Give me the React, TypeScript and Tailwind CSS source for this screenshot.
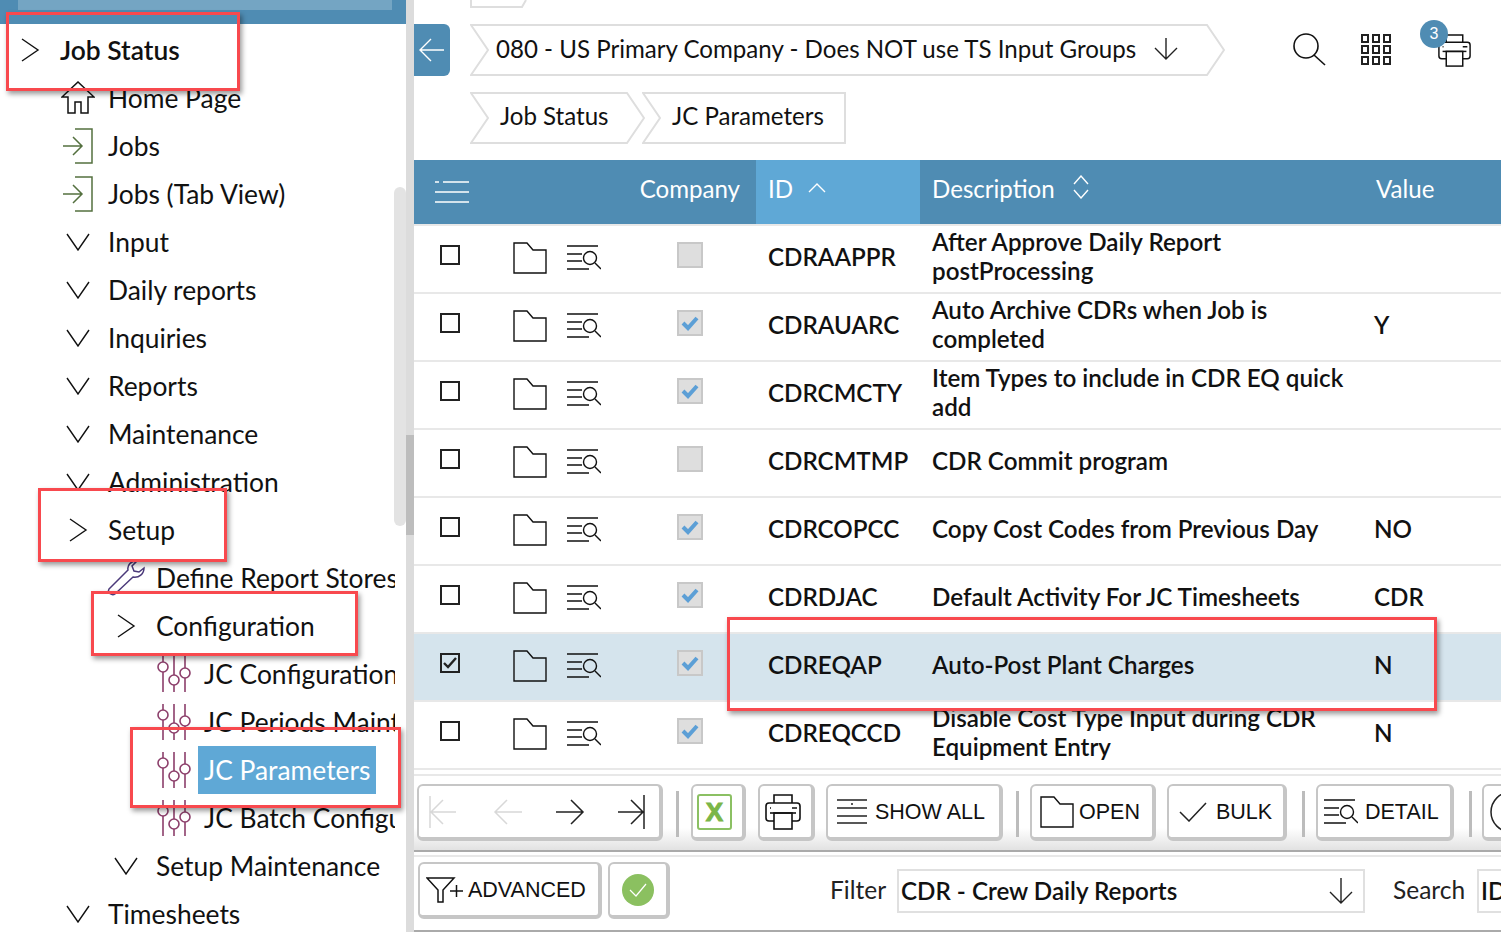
import type { ReactNode } from "react";

const Chevron = ({ dir }: { dir: "right" | "down" }) =>
  dir === "right" ? (
    <svg width="20" height="26" viewBox="0 0 20 26" fill="none" stroke="#111" strokeWidth="1.4">
      <path d="M2 2 L18 13 L2 24" />
    </svg>
  ) : (
    <svg width="24" height="18" viewBox="0 0 24 18" fill="none" stroke="#111" strokeWidth="1.4">
      <path d="M1 1 L12 17 L23 1" />
    </svg>
  );

const HomeIcon = () => (
  <svg width="34" height="34" viewBox="0 0 34 34" fill="none" stroke="#111" strokeWidth="1.5">
    <path d="M1 16 L17 1 L33 16 L27 16 L27 32 L20 32 L20 21 L14 21 L14 32 L7 32 L7 16 Z" />
  </svg>
);

const JobIcon = () => (
  <svg width="32" height="36" viewBox="0 0 32 36" fill="none" stroke="#54703f" strokeWidth="1.5">
    <path d="M13 1 H30 V35 H13" />
    <path d="M1 18 H20 M11 9 L20 18 L11 27" />
  </svg>
);

const SliderIcon = () => (
  <svg width="36" height="38" viewBox="0 0 36 38" fill="none" stroke="#8c3f6b" strokeWidth="1.6">
    <path d="M7 1 V7 M7 17 V37 M18 1 V20 M18 30 V37 M29 1 V13 M29 23 V37" />
    <circle cx="7" cy="12" r="5" />
    <circle cx="18" cy="25" r="5" />
    <circle cx="29" cy="18" r="5" />
  </svg>
);

const WrenchIcon = () => (
  <svg width="38" height="36" viewBox="0 0 38 36" fill="none" stroke="#4b3a7a" strokeWidth="1.5">
    <path d="M2 29 L21 10 C20 5 24 1 30 1 L25 6 L27 11 L32 12 L37 8 C37 14 32 18 26 17 L8 34 C5 36 0 33 2 29 Z" />
  </svg>
);

type NavItem = { level: number; icon: ReactNode; label: string; selected?: boolean; bold?: boolean };

const navItems: NavItem[] = [
  { level: 0, icon: <Chevron dir="right" />, label: "Job Status", bold: true },
  { level: 1, icon: <HomeIcon />, label: "Home Page" },
  { level: 1, icon: <JobIcon />, label: "Jobs" },
  { level: 1, icon: <JobIcon />, label: "Jobs (Tab View)" },
  { level: 1, icon: <Chevron dir="down" />, label: "Input" },
  { level: 1, icon: <Chevron dir="down" />, label: "Daily reports" },
  { level: 1, icon: <Chevron dir="down" />, label: "Inquiries" },
  { level: 1, icon: <Chevron dir="down" />, label: "Reports" },
  { level: 1, icon: <Chevron dir="down" />, label: "Maintenance" },
  { level: 1, icon: <Chevron dir="down" />, label: "Administration" },
  { level: 1, icon: <Chevron dir="right" />, label: "Setup" },
  { level: 2, icon: <WrenchIcon />, label: "Define Report Stores" },
  { level: 2, icon: <Chevron dir="right" />, label: "Configuration" },
  { level: 3, icon: <SliderIcon />, label: "JC Configuration" },
  { level: 3, icon: <SliderIcon />, label: "JC Periods Maintenance" },
  { level: 3, icon: <SliderIcon />, label: "JC Parameters", selected: true },
  { level: 3, icon: <SliderIcon />, label: "JC Batch Configuration" },
  { level: 2, icon: <Chevron dir="down" />, label: "Setup Maintenance" },
  { level: 1, icon: <Chevron dir="down" />, label: "Timesheets" },
];

const levelPadding = ["pl-[6px]", "pl-[54px]", "pl-[102px]", "pl-[150px]"];

function Sidebar() {
  return (
    <div className="relative w-[406px] shrink-0 overflow-hidden text-[26.4px]">
      <div className="h-6 bg-[#4f8cb3] pl-[18px] pr-[14px]">
        <div className="h-[10px] bg-[#74a5c3]" />
      </div>
      <div className="w-[395px] overflow-hidden pt-[2px]">
        {navItems.map((item) => (
          <div key={item.label} className={`flex h-12 items-center ${levelPadding[item.level]}`}>
            <div className="flex h-12 w-12 shrink-0 items-center justify-center">{item.icon}</div>
            <span
              className={`flex h-12 items-center whitespace-nowrap px-[6px] ${
                item.selected ? "bg-[#5fa8d6] text-white" : "text-[#111]"
              } ${item.bold ? "font-semibold" : ""}`}
            >
              {item.label}
            </span>
          </div>
        ))}
      </div>
      <div className="absolute left-[394px] top-[187px] h-[339px] w-3 rounded-md bg-[#e3e3e3]" />
    </div>
  );
}

function Crumb({ width, last, className, children }: { width: number; last?: boolean; className: string; children: ReactNode }) {
  const d = last
    ? `M1 1 H${width - 1} V51 H1 L18 26 Z`
    : `M1 1 H${width - 18} L${width - 1} 26 L${width - 18} 51 H1 L18 26 Z`;
  return (
    <div className={`relative flex h-[52px] items-center ${className}`}>
      <svg className="absolute inset-0" width={width} height="52" fill="none" stroke="#dedede" strokeWidth="2">
        <path d={d} />
      </svg>
      {children}
    </div>
  );
}

const FolderIcon = ({ small }: { small?: boolean }) => (
  <svg width="34" height="32" viewBox="0 0 34 32" fill="none" stroke="#111" strokeWidth="1.4" className={small ? "" : "mt-[4px]"}>
    <path d="M1 1 H14 L20 8 H33 V31 H1 Z" />
  </svg>
);

const DetailIcon = () => (
  <svg width="34" height="26" viewBox="0 0 34 26" fill="none" stroke="#111" strokeWidth="1.4">
    <path d="M0 1 H31 M0 9 H15 M0 16 H15 M0 24 H22" />
    <circle cx="23" cy="13" r="6.5" />
    <path d="M28 18 L34 24" />
  </svg>
);

const BlueCheck = () => (
  <svg width="18" height="15" viewBox="0 0 18 15" fill="none" stroke="#5c9fd6" strokeWidth="4">
    <path d="M2 7 L7 12 L16 2" />
  </svg>
);

type RowData = { id: string; desc: string; value: string; on: boolean; selected?: boolean };

const rows: RowData[] = [
  { id: "CDRAAPPR", desc: "After Approve Daily Report postProcessing", value: "", on: false },
  { id: "CDRAUARC", desc: "Auto Archive CDRs when Job is completed", value: "Y", on: true },
  { id: "CDRCMCTY", desc: "Item Types to include in CDR EQ quick add", value: "", on: true },
  { id: "CDRCMTMP", desc: "CDR Commit program", value: "", on: false },
  { id: "CDRCOPCC", desc: "Copy Cost Codes from Previous Day", value: "NO", on: true },
  { id: "CDRDJAC", desc: "Default Activity For JC Timesheets", value: "CDR", on: true },
  { id: "CDREQAP", desc: "Auto-Post Plant Charges", value: "N", on: true, selected: true },
  { id: "CDREQCCD", desc: "Disable Cost Type Input during CDR Equipment Entry", value: "N", on: true },
];

function Row({ row }: { row: RowData }) {
  return (
    <div
      className={`flex h-[68px] items-center border-b-2 border-[#e8e8e8] pb-[6px] pl-[26px] text-[24.2px] font-semibold leading-[29px] text-[#111] ${
        row.selected ? "bg-[#d5e4ed]" : ""
      }`}
    >
      <div className="mb-[2px] flex h-5 w-5 shrink-0 items-center justify-center border-2 border-[#222]">
        {row.selected && (
          <svg width="14" height="12" viewBox="0 0 14 12" fill="none" stroke="#222" strokeWidth="2.4">
            <path d="M1 6 L5 10 L13 1" />
          </svg>
        )}
      </div>
      <div className="ml-[53px] shrink-0">
        <FolderIcon />
      </div>
      <div className="ml-5 mt-[4px] shrink-0">
        <DetailIcon />
      </div>
      <div className="mb-[2px] ml-[76px] flex h-[26px] w-[26px] shrink-0 items-center justify-center border-2 border-[#c8c8c8] bg-[#dedede]">
        {row.on && <BlueCheck />}
      </div>
      <div className="ml-[65px] w-[164px] shrink-0">{row.id}</div>
      <div className="w-[443px] shrink-0 pr-[13px]">{row.desc}</div>
      <div className="-ml-px">{row.value}</div>
    </div>
  );
}

function TableHeader() {
  return (
    <div className="flex h-16 bg-[#4f8cb3] pb-[7px] text-white">
      <div className="flex w-[342px] shrink-0 items-center justify-between pl-[21px] pr-[16px]">
        <svg className="mt-[7px]" width="34" height="22" viewBox="0 0 34 22" stroke="#fff" strokeWidth="1.4">
          <path d="M0 1 H4 M8 1 H34 M0 11 H34 M0 21 H34" />
        </svg>
        <span>Company</span>
      </div>
      <div className="-mb-[7px] flex w-[164px] shrink-0 items-center bg-[#5fa8d6] pb-[7px] pl-3">
        <span>ID</span>
        <svg className="mb-[1px] ml-[15px]" width="18" height="10" viewBox="0 0 18 10" fill="none" stroke="#fff" strokeWidth="1.4">
          <path d="M1 9 L9 1 L17 9" />
        </svg>
      </div>
      <div className="flex w-[443px] shrink-0 items-center pl-3">
        <span>Description</span>
        <svg className="mb-[3px] ml-[17px]" width="18" height="24" viewBox="0 0 18 24" fill="none" stroke="#fff" strokeWidth="1.4">
          <path d="M2 9 L9 1 L16 9 M2 15 L9 23 L16 15" />
        </svg>
      </div>
      <div className="flex items-center pl-[13px]">Value</div>
    </div>
  );
}

function ToolBtn({ className, children }: { className: string; children: ReactNode }) {
  return (
    <div
      className={`flex h-[57px] shrink-0 items-center rounded-md border-2 border-b-4 border-r-4 border-[#c6c6c6] bg-white [font-family:'Liberation_Sans',sans-serif] text-[21.5px] text-[#111] ${className}`}
    >
      {children}
    </div>
  );
}

const Sep = ({ className }: { className: string }) => <div className={`h-[46px] w-[3px] shrink-0 bg-[#bcbcbc] ${className}`} />;

const PrinterIcon = ({ w = 36 }: { w?: number }) => (
  <svg width={w} height={w} viewBox="0 0 36 36" fill="none" stroke="#111" strokeWidth="1.6">
    <path d="M9 9 V1 H27 V9" />
    <rect x="1" y="9" width="34" height="18" rx="3" />
    <path d="M27 14 H32 M5 14 H6" />
    <rect x="9" y="19" width="18" height="16" fill="#fff" />
    <path d="M5 19 H31" />
  </svg>
);

function Toolbar() {
  return (
    <div className="flex h-[76px] items-start overflow-hidden border-b-2 border-[#aaa] bg-gradient-to-b from-white from-70% to-[#e2e2e2] pt-[8px]">
      <ToolBtn className="ml-[3px] w-[246px] pl-[10px]">
        <svg width="28" height="34" viewBox="0 0 28 34" fill="none" stroke="#d8d8d8" strokeWidth="1.5">
          <path d="M1 1 V33 M27 17 H2 M14 5 L2 17 L14 29" />
        </svg>
        <svg className="ml-[36px]" width="30" height="28" viewBox="0 0 30 28" fill="none" stroke="#d8d8d8" strokeWidth="1.5">
          <path d="M29 14 H2 M14 2 L2 14 L14 26" />
        </svg>
        <svg className="ml-[32px]" width="30" height="28" viewBox="0 0 30 28" fill="none" stroke="#222" strokeWidth="1.5">
          <path d="M1 14 H28 M16 2 L28 14 L16 26" />
        </svg>
        <svg className="ml-[32px]" width="28" height="36" viewBox="0 0 28 36" fill="none" stroke="#222" strokeWidth="1.5">
          <path d="M27 1 V35 M1 18 H26 M14 6 L26 18 L14 30" />
        </svg>
      </ToolBtn>
      <Sep className="ml-[13px] mt-[7px]" />
      <ToolBtn className="ml-3 w-[55px] pl-[4px]">
        <div className="flex h-[36px] w-[35px] items-center justify-center rounded-[3px] border-2 border-[#8bc063]">
          <span className="text-[26px] font-bold leading-none text-[#7ab648] [-webkit-text-stroke:1px_#7ab648]">X</span>
        </div>
      </ToolBtn>
      <ToolBtn className="ml-3 w-[57px] pl-[5px]">
        <PrinterIcon />
      </ToolBtn>
      <ToolBtn className="ml-[11px] w-[177px] gap-[7px] pl-[8px]">
        <svg width="32" height="26" viewBox="0 0 32 26" fill="none" stroke="#222" strokeWidth="1.6">
          <path d="M1 1 H31 M1 9 H31 M15 5 H17 M1 17 H31 M1 24 H31" />
        </svg>
        <span>SHOW ALL</span>
      </ToolBtn>
      <Sep className="ml-[13px] mt-[7px]" />
      <ToolBtn className="ml-[11px] w-[126px] gap-[5px] pl-[8px]">
        <FolderIcon small />
        <span>OPEN</span>
      </ToolBtn>
      <ToolBtn className="ml-[11px] w-[120px] gap-[9px] pl-[10px]">
        <svg width="28" height="20" viewBox="0 0 28 20" fill="none" stroke="#222" strokeWidth="1.5">
          <path d="M1 10 L10 19 L27 1" />
        </svg>
        <span>BULK</span>
      </ToolBtn>
      <Sep className="ml-[15px] mt-[7px]" />
      <ToolBtn className="ml-[11px] w-[138px] gap-[7px] pl-[6px]">
        <DetailIcon />
        <span>DETAIL</span>
      </ToolBtn>
      <Sep className="ml-[15px] mt-[7px]" />
      <ToolBtn className="ml-[10px] w-[60px] pl-[5px]">
        <svg width="44" height="44" viewBox="0 0 44 44" fill="none" stroke="#222" strokeWidth="1.5" className="shrink-0">
          <circle cx="22" cy="22" r="20" />
        </svg>
      </ToolBtn>
    </div>
  );
}

function FilterBar() {
  return (
    <div className="mt-[3px] h-[78px] border-t-2 border-[#e8e8e8]">
      <div className="flex h-[75px] items-center border-b-2 border-[#aaa] pb-[6px]">
        <ToolBtn className="ml-1 w-[184px] pl-[6px]">
          <svg width="40" height="26" viewBox="0 0 40 26" fill="none" stroke="#111" strokeWidth="1.5">
            <path d="M1 1 H28 L17 13 V25 H12 V13 Z M24 14 H37 M30.5 8 V20" />
          </svg>
          <span className="ml-[2px]">ADVANCED</span>
        </ToolBtn>
        <ToolBtn className="ml-[6px] w-[62px] justify-center">
          <svg width="32" height="32" viewBox="0 0 32 32" fill="none" stroke="#fff" strokeWidth="1.2">
            <circle cx="16" cy="16" r="16" fill="#8bc060" stroke="none" />
            <path d="M8 16 L14 22 L24 10" />
          </svg>
        </ToolBtn>
        <span className="ml-[160px] w-[67px] shrink-0 pb-[2px] text-[24.5px] text-[#222]">Filter</span>
        <div className="flex h-[44px] w-[468px] shrink-0 items-center justify-between border-2 border-[#e0e0e0] pl-[2px] pr-[9px] text-[24.2px] font-semibold text-[#111]">
          <span>CDR - Crew Daily Reports</span>
          <svg width="26" height="28" viewBox="0 0 26 28" fill="none" stroke="#222" strokeWidth="1.4">
            <path d="M13 1 V26 M2 15 L13 26 L24 15" />
          </svg>
        </div>
        <span className="ml-7 w-[84px] shrink-0 pb-[2px] text-[24.5px] text-[#222]">Search</span>
        <div className="flex h-[44px] w-[60px] shrink-0 items-center border-2 border-[#e0e0e0] pl-[2px] font-semibold text-[#111]">ID</div>
      </div>
    </div>
  );
}

function Main() {
  return (
    <div className="w-[1087px] shrink-0 overflow-hidden text-[24.1px]">
      <div className="h-6 pl-14">
        <svg width="58" height="8" fill="none" stroke="#dedede" strokeWidth="2">
          <path d="M1 0 V7 H52 L56 0" />
        </svg>
      </div>
      <div className="flex h-[52px] items-center">
        <div className="flex h-[52px] w-9 shrink-0 items-center justify-center rounded-r-md bg-[#4f8cb3]">
          <svg width="26" height="24" viewBox="0 0 26 24" fill="none" stroke="#fff" strokeWidth="1.4">
            <path d="M25 12 H2 M12 1 L1 12 L12 23" />
          </svg>
        </div>
        <Crumb width={755} className="ml-5 w-[755px] shrink-0 pb-[2px] pl-[26px]">
          <span className="relative whitespace-nowrap text-[#111]">080 - US Primary Company - Does NOT use TS Input Groups</span>
          <svg className="relative ml-[17px]" width="26" height="24" viewBox="0 0 26 24" fill="none" stroke="#222" strokeWidth="1.4">
            <path d="M13 1 V22 M2 11 L13 22 L24 11" />
          </svg>
        </Crumb>
        <svg className="ml-[67px] shrink-0" width="34" height="34" viewBox="0 0 34 34" fill="none" stroke="#111" strokeWidth="1.6">
          <circle cx="14" cy="13" r="12" />
          <path d="M22 22 L33 32" />
        </svg>
        <svg className="ml-[34px] shrink-0" width="32" height="32" viewBox="0 0 32 32" fill="none" stroke="#222" strokeWidth="2">
          {[1, 12, 23].map((y) =>
            [2, 13, 24].map((x) => <rect key={`${x}-${y}`} x={x} y={y} width="6" height="7" />)
          )}
        </svg>
        <div className="relative ml-[46px] shrink-0">
          <PrinterIcon w={33} />
          <div className="absolute -left-[18px] -top-[14px] flex h-[28px] w-[28px] items-center justify-center rounded-full bg-[#4f8cb3] [font-family:'Liberation_Sans',sans-serif] text-[16px] text-white">
            3
          </div>
        </div>
      </div>
      <div className="mt-4 flex pl-14">
        <Crumb width={175} className="w-[175px] shrink-0 pb-[4px] pl-[30px]">
          <span className="relative text-[#111]">Job Status</span>
        </Crumb>
        <Crumb width={204} last className="-ml-[3px] w-[204px] shrink-0 pb-[4px] pl-[30px]">
          <span className="relative text-[#111]">JC Parameters</span>
        </Crumb>
      </div>
      <div className="mt-4">
        <TableHeader />
      </div>
      <div className="h-[2px] bg-[#e8e8e8]" />
      {rows.map((row) => (
        <Row key={row.id} row={row} />
      ))}
      <div className="mt-[4px] h-[2px] bg-[#e8e8e8]" />
      <Toolbar />
      <FilterBar />
    </div>
  );
}

const boxClass = "pointer-events-none absolute border-[3px] border-[#f8494e] shadow-[2px_3px_5px_rgba(0,0,0,0.4)]";

export default function App() {
  return (
    <div className="relative flex h-[932px] w-[1501px] overflow-hidden bg-white [font-family:Lato,sans-serif] leading-[30px]">
      <Sidebar />
      <div className="relative w-2 shrink-0 bg-[#dcdcdc]">
        <div className="absolute left-0 top-[435px] h-[100px] w-2 bg-[#bdbdbd]" />
      </div>
      <Main />
      <div className={`${boxClass} left-[6px] top-[12px] h-[79px] w-[234px]`} />
      <div className={`${boxClass} left-[38px] top-[488px] h-[74px] w-[189px]`} />
      <div className={`${boxClass} left-[91px] top-[591px] h-[65px] w-[267px]`} />
      <div className={`${boxClass} left-[130px] top-[727px] h-[81px] w-[271px]`} />
      <div className={`${boxClass} left-[727px] top-[617px] h-[94px] w-[710px]`} />
    </div>
  );
}
